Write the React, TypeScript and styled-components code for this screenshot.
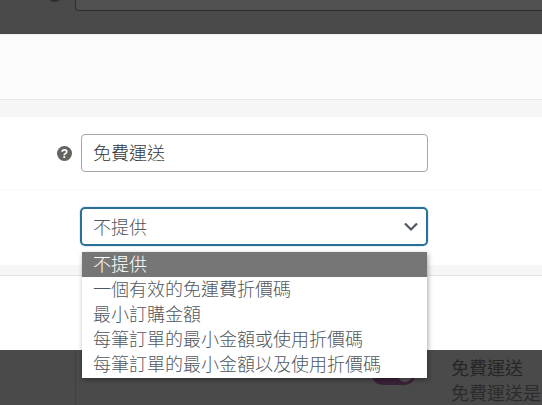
import React from "react";
import styled, { createGlobalStyle } from "styled-components";

const Global = createGlobalStyle`
  html, body { margin: 0; padding: 0; background: #4a4a4a; }
  body { font-family: "Noto Sans CJK TC", "Liberation Sans", sans-serif; font-weight: 300; }
`;

const Page = styled.div`
  width: 542px;
  height: 405px;
  overflow: hidden;
  position: relative;
  display: flex;
  flex-direction: column;
`;

const TopDim = styled.div`
  height: 35px;
  flex: none;
  background: #4a4a4a;
  box-sizing: border-box;
  padding-left: 47px;
  border-bottom: 1px solid #f0f0f0;
  display: flex;
  overflow: hidden;
`;

const DimHelp = styled.div`
  width: 15px;
  height: 15px;
  margin: -13px 13px 0 0;
  flex: none;
  border-radius: 50%;
  background: #2e2e2e;
`;

const DimInput = styled.div`
  flex: 1;
  margin-top: -28px;
  height: 39px;
  box-sizing: border-box;
  border: 1px solid #2e2e2e;
  border-right: none;
  border-radius: 4px 0 0 4px;
  background: #505050;
  padding-left: 11px;
  font-size: 18px;
  line-height: 34px;
  color: #222;
`;

const Modal = styled.div`
  flex: none;
  display: flex;
  flex-direction: column;
`;

const Spacer = styled.div`
  height: 64px;
  background: #fcfcfc;
  border-bottom: 1px solid #e5e5e5;
`;

const Strip = styled.div<{ $h: number }>`
  height: ${(p) => p.$h}px;
  background: #f6f6f6;
`;

const Row = styled.div<{ $h: number; $line?: boolean }>`
  height: ${(p) => p.$h}px;
  box-sizing: border-box;
  background: #fff;
  display: flex;
  align-items: flex-start;
  padding-left: 57px;
  ${(p) => (p.$line ? "border-bottom: 1px solid #f9f9f9;" : "")}
`;

const Help = styled.svg`
  width: 15px;
  height: 15px;
  margin: 29px 9px 0 0;
  flex: none;
`;

const TextField = styled.div`
  margin-top: 17px;
  width: 347px;
  height: 38px;
  box-sizing: border-box;
  border: 1px solid #a8a8a8;
  border-radius: 4px;
  padding-left: 11px;
  font-size: 18px;
  line-height: 34px;
  color: #32373c;
`;

const SelectBox = styled.div`
  margin: 17px 0 0 23px;
  width: 348px;
  height: 39px;
  box-sizing: border-box;
  border: 2px solid #2a6f97;
  border-radius: 5px;
  box-shadow: 0 0 0 1px #e4f1f8;
  padding: 0 0 0 11px;
  font-size: 18px;
  line-height: 33px;
  color: #50575e;
  display: flex;
  justify-content: space-between;
  align-items: center;
`;

const Chevron = styled.svg`
  width: 16px;
  height: 16px;
  flex: none;
  margin: 0 7px 0 0;
`;

const ModalFoot = styled.div`
  height: 75px;
  box-sizing: border-box;
  background: #fff;
  border-top: 1px solid #e2e2e2;
`;

const BottomDim = styled.div`
  flex: 1;
  background: #4a4a4a;
  display: flex;
  padding-left: 75px;
`;

const DimColumn = styled.div`
  flex: 1;
  border-left: 1px solid #404040;
  display: flex;
  align-items: flex-start;
  padding: 0 0 0 296px;
  min-width: 0;
  overflow: hidden;
`;

const Toggle = styled.div`
  width: 43px;
  height: 20px;
  margin-top: 15px;
  flex: none;
  border-radius: 10px;
  background: #3a2238;
  display: flex;
  justify-content: flex-end;
  align-items: center;
  padding-right: 3px;
  box-sizing: border-box;
`;

const Knob = styled.div`
  width: 14px;
  height: 14px;
  border-radius: 50%;
  background: #555055;
`;

const DimText = styled.div`
  margin-left: 36px;
  white-space: nowrap;
  font-size: 18px;
  line-height: 25px;
  padding-top: 5px;
  font-weight: 400;
  color: #2c2c2c;
`;

const DimTitle = styled.div`
  font-weight: 400;
  color: #262626;
`;

const Dropdown = styled.ul`
  position: absolute;
  left: 82px;
  top: 252px;
  width: 345px;
  margin: 0;
  padding: 0 0 1px;
  list-style: none;
  background: #fff;
  box-shadow: 1px 2px 5px rgba(0, 0, 0, 0.35);
`;

const Option = styled.li<{ $active?: boolean }>`
  height: 25px;
  padding-left: 11px;
  font-size: 18px;
  line-height: 22px;
  white-space: nowrap;
  color: ${(p) => (p.$active ? "#fff" : "#50575e")};
  background: ${(p) => (p.$active ? "#767676" : "#fff")};
`;

export default function App() {
  return (
    <Page>
      <Global />
      <TopDim>
        <DimHelp />
        <DimInput>免費</DimInput>
      </TopDim>
      <Modal>
        <Spacer />
        <Strip $h={17} />
        <Row $h={73} $line>
          <Help viewBox="0 0 15 15">
            <circle cx="7.5" cy="7.5" r="7.5" fill="#636363" />
            <text x="7.5" y="11.8" textAnchor="middle" fontSize="12" fontWeight="700" fontFamily="Liberation Sans" fill="#fff">?</text>
          </Help>
          <TextField>免費運送</TextField>
        </Row>
        <Row $h={75}>
          <SelectBox>
            不提供
            <Chevron viewBox="0 0 16 16">
              <path d="M2 4.5 8 10.5l6-6" fill="none" stroke="#50575e" strokeWidth="2.2" />
            </Chevron>
          </SelectBox>
        </Row>
        <Strip $h={10} />
        <ModalFoot />
      </Modal>
      <BottomDim>
        <DimColumn>
          <Toggle><Knob /></Toggle>
          <DimText>
            <DimTitle>免費運送</DimTitle>
            免費運送是免費的運送方式
          </DimText>
        </DimColumn>
      </BottomDim>
      <Dropdown>
        <Option $active>不提供</Option>
        <Option>一個有效的免運費折價碼</Option>
        <Option>最小訂購金額</Option>
        <Option>每筆訂單的最小金額或使用折價碼</Option>
        <Option>每筆訂單的最小金額以及使用折價碼</Option>
      </Dropdown>
    </Page>
  );
}
